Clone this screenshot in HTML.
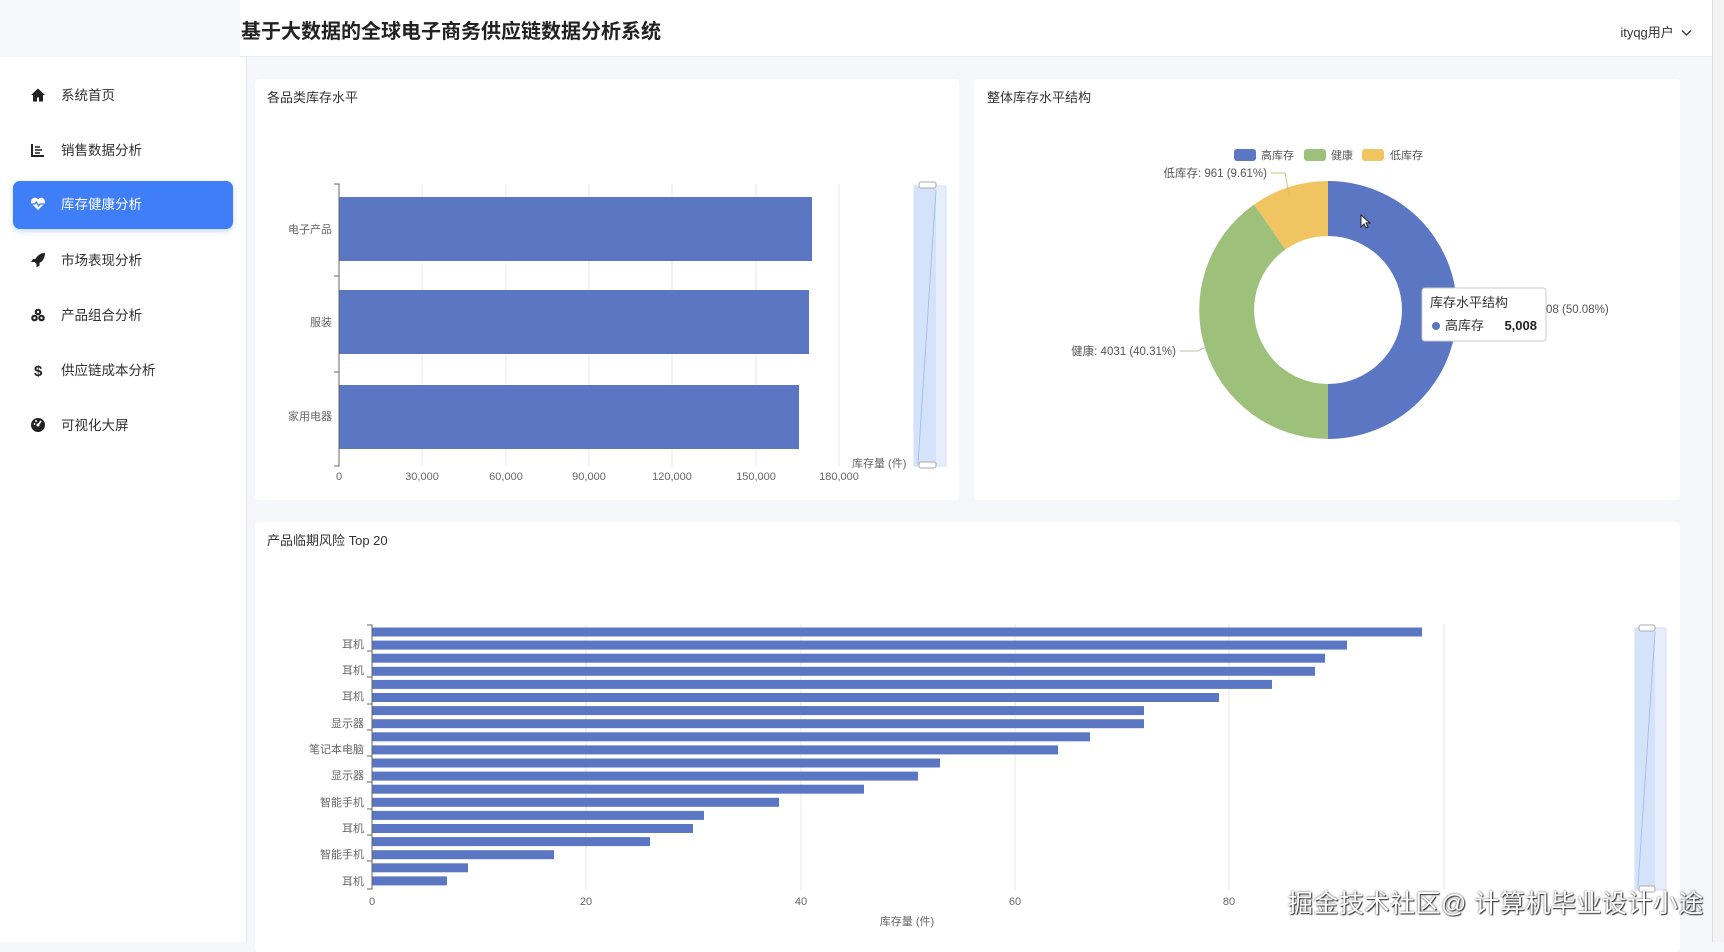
<!DOCTYPE html>
<html><head><meta charset="utf-8"><style>
*{margin:0;padding:0;box-sizing:border-box}
body{width:1724px;height:942px;overflow:hidden;background:#f5f7fa;font-family:"Liberation Sans","Noto Sans CJK SC",sans-serif;position:relative;color:#303133}
.hl{position:absolute;left:0;top:0;width:240px;height:57px;background:#f7f8fa}
.hd{position:absolute;left:240px;top:0;width:1472px;height:57px;background:#fff;border-bottom:1px solid #e8eaee}
.hd h1{position:absolute;left:1px;top:20px;font-size:20px;font-weight:bold;color:#222;line-height:24px}
.user{position:absolute;right:20px;top:22px;font-size:13px;color:#333}
.sb{position:absolute;left:0;top:57px;width:247px;height:885px;background:#fff;border-right:1px solid #e6e8eb}
.it{position:absolute;left:13px;width:220px;height:48px;font-size:13.5px;color:#303133;line-height:48px}
.it .ic{position:absolute;left:17px;top:15px;width:16px;height:16px}
.it span{position:absolute;left:48px}
.act{background:#3f7ef6;color:#fff;border-radius:7px;box-shadow:0 2px 6px rgba(63,126,246,.3)}
.card{position:absolute;background:#fff;border-radius:4px}
.sc{position:absolute;left:1712px;top:0;width:12px;height:942px;background:#f3f3f3;border-left:1px solid #ddd}
.wm{position:absolute;left:1288px;top:884px;font-size:25px;color:#fff;text-shadow:0 0 2px #444,1px 1px 1px #333;letter-spacing:0.5px;white-space:nowrap}
svg text{font-family:"Liberation Sans","Noto Sans CJK SC",sans-serif}
</style></head><body>
<div class="hl"></div>
<div class="hd"><h1>基于大数据的全球电子商务供应链数据分析系统</h1><div class="user">ityqg用户 &nbsp;<svg width="11" height="8" viewBox="0 0 11 8"><path d="M1 1.5L5.5 6L10 1.5" stroke="#333" stroke-width="1.3" fill="none"/></svg></div></div>
<div class="sb">
<div class="it" style="top:15px"><svg class="ic" viewBox="0 0 16 16"><path d="M8 1.5L1 8h2v6.5h4v-4h2v4h4V8h2z" fill="#222"/></svg><span>系统首页</span></div>
<div class="it" style="top:70px"><svg class="ic" viewBox="0 0 16 16"><path d="M2 2v12h12" stroke="#222" stroke-width="2" fill="none"/><path d="M5 5h5M5 8h7M5 11h5" stroke="#222" stroke-width="1.6"/></svg><span>销售数据分析</span></div>
<div class="it act" style="top:124px"><svg class="ic" viewBox="0 0 16 16"><path d="M8 14L1.8 8A3.6 3.6 0 0 1 8 3.2 3.6 3.6 0 0 1 14.2 8z" fill="#fff"/><path d="M2 8h3l1.5-2 2 4 1.5-2h4" stroke="#3f7ef6" stroke-width="1.3" fill="none"/></svg><span>库存健康分析</span></div>
<div class="it" style="top:180px"><svg class="ic" viewBox="0 0 16 16"><path d="M15 1C10 1 7 4 5.5 7L3 7 1 10h3.5l2 2V15.5l3-2V11c3-1.5 5.5-5 5.5-10z" fill="#222"/></svg><span>市场表现分析</span></div>
<div class="it" style="top:235px"><svg class="ic" viewBox="0 0 16 16"><circle cx="8" cy="5" r="3.3" fill="#222"/><circle cx="4.5" cy="11" r="3.3" fill="#222"/><circle cx="11.5" cy="11" r="3.3" fill="#222"/><circle cx="8" cy="5" r="1.2" fill="#fff"/><circle cx="4.5" cy="11" r="1.2" fill="#fff"/><circle cx="11.5" cy="11" r="1.2" fill="#fff"/></svg><span>产品组合分析</span></div>
<div class="it" style="top:290px"><svg class="ic" viewBox="0 0 16 16"><text x="4" y="14" font-size="15" font-weight="bold" fill="#222">$</text></svg><span>供应链成本分析</span></div>
<div class="it" style="top:345px"><svg class="ic" viewBox="0 0 16 16"><circle cx="8" cy="8" r="7" fill="#222"/><path d="M8 8l3-4" stroke="#fff" stroke-width="1.6"/><circle cx="8" cy="8" r="1.5" fill="#fff"/><circle cx="4.5" cy="7" r="1" fill="#fff"/><circle cx="6" cy="4" r="1" fill="#fff"/></svg><span>可视化大屏</span></div>
</div>
<div class="card" style="left:255px;top:79px;width:704px;height:421px"></div>
<div class="card" style="left:974px;top:79px;width:706px;height:421px"></div>
<div class="card" style="left:255px;top:522px;width:1425px;height:430px"></div>
<svg style="position:absolute;left:0;top:0" width="1724" height="942">
<g font-size="13" fill="#333"><text x="267" y="102">各品类库存水平</text><text x="987" y="102">整体库存水平结构</text><text x="267" y="545">产品临期风险 Top 20</text></g>
<g stroke="#e8eaee"><line x1="422" y1="184" x2="422" y2="466"/><line x1="506" y1="184" x2="506" y2="466"/><line x1="589" y1="184" x2="589" y2="466"/><line x1="672" y1="184" x2="672" y2="466"/><line x1="756" y1="184" x2="756" y2="466"/><line x1="839" y1="184" x2="839" y2="466"/></g>
<g fill="#5b76c3"><rect x="339" y="197" width="473" height="64"/><rect x="339" y="290" width="470" height="64"/><rect x="339" y="385" width="460" height="64"/></g>
<g stroke="#666" fill="none"><path d="M334 184h5v282h-5M334 276h5M334 372h5"/></g>
<g font-size="11" fill="#666" text-anchor="end"><text x="332" y="233">电子产品</text><text x="332" y="326">服装</text><text x="332" y="420">家用电器</text></g>
<g font-size="11" fill="#666" text-anchor="middle"><text x="339" y="480">0</text><text x="422" y="480">30,000</text><text x="506" y="480">60,000</text><text x="589" y="480">90,000</text><text x="672" y="480">120,000</text><text x="756" y="480">150,000</text><text x="839" y="480">180,000</text></g>
<text x="852" y="467" font-size="11" fill="#666">库存量 (件)</text>
<rect x="914" y="186" width="32" height="280" fill="#e6eefc" stroke="#d4dcf0"/><rect x="914" y="186" width="22" height="280" fill="#d5e3fa"/><path d="M936 190L918 464" stroke="#a8bff0" fill="none"/><rect x="919" y="182" width="17" height="6" rx="2" fill="#fff" stroke="#aaa"/><rect x="919" y="462" width="17" height="6" rx="2" fill="#fff" stroke="#aaa"/>
<g>
<path d="M1328 181A129 129 0 0 1 1328 439L1328 384A74 74 0 0 0 1328 236Z" fill="#5b76c3"/>
<path d="M1328 439A129 129 0 0 1 1254 204.5L1285.5 249.5A74 74 0 0 0 1328 384Z" fill="#9dc17a"/>
<path d="M1254 204.5A129 129 0 0 1 1328 181L1328 236A74 74 0 0 0 1285.5 249.5Z" fill="#f1c462"/>
</g>
<path d="M1271 173h14l4 22" stroke="#d8c07a" fill="none"/><path d="M1180 351h18l8-4" stroke="#b8c8a0" fill="none"/>
<g font-size="11.5" fill="#555"><text x="1267" y="177" text-anchor="end">低库存: 961 (9.61%)</text><text x="1176" y="355" text-anchor="end">健康: 4031 (40.31%)</text><text x="1546" y="313">08 (50.08%)</text></g>
<g font-size="11" fill="#555"><rect x="1234" y="149" width="22" height="12" rx="3" fill="#5b76c3"/><text x="1261" y="159">高库存</text><rect x="1304" y="149" width="22" height="12" rx="3" fill="#9dc17a"/><text x="1331" y="159">健康</text><rect x="1362" y="149" width="22" height="12" rx="3" fill="#f1c462"/><text x="1390" y="159">低库存</text></g>
<rect x="1422" y="288" width="124" height="53" rx="3" fill="#fff" stroke="#ccc"/>
<text x="1430" y="307" font-size="13" fill="#333">库存水平结构</text><circle cx="1436" cy="326" r="4" fill="#5b76c3"/><text x="1445" y="330" font-size="13" fill="#333">高库存</text><text x="1537" y="330" font-size="13" font-weight="bold" fill="#222" text-anchor="end">5,008</text>
<path d="M1361 215v12l3-3 2 4 2-1-2-4h4z" fill="#fff" stroke="#222" stroke-width="1"/>
<g stroke="#e8eaee"><line x1="586" y1="624" x2="586" y2="890"/><line x1="801" y1="624" x2="801" y2="890"/><line x1="1015" y1="624" x2="1015" y2="890"/><line x1="1229" y1="624" x2="1229" y2="890"/><line x1="1444" y1="624" x2="1444" y2="890"/></g>
<g fill="#5b76c3">
<rect x="372" y="627.5" width="1050" height="9"/><rect x="372" y="640.6" width="975" height="9"/><rect x="372" y="653.7" width="953" height="9"/><rect x="372" y="666.8" width="943" height="9"/><rect x="372" y="679.9" width="900" height="9"/><rect x="372" y="693" width="847" height="9"/><rect x="372" y="706.1" width="772" height="9"/><rect x="372" y="719.2" width="772" height="9"/><rect x="372" y="732.3" width="718" height="9"/><rect x="372" y="745.4" width="686" height="9"/><rect x="372" y="758.5" width="568" height="9"/><rect x="372" y="771.6" width="546" height="9"/><rect x="372" y="784.7" width="492" height="9"/><rect x="372" y="797.8" width="407" height="9"/><rect x="372" y="810.9" width="332" height="9"/><rect x="372" y="824" width="321" height="9"/><rect x="372" y="837.1" width="278" height="9"/><rect x="372" y="850.2" width="182" height="9"/><rect x="372" y="863.3" width="96" height="9"/><rect x="372" y="876.4" width="75" height="9"/>
</g>
<path d="M367 625h5v264h-5M367 651h5M367 677h5M367 704h5M367 730h5M367 756h5M367 782h5M367 809h5M367 835h5M367 861h5" stroke="#666" fill="none"/>
<g font-size="11" fill="#666" text-anchor="end"><text x="364" y="648">耳机</text><text x="364" y="674">耳机</text><text x="364" y="700">耳机</text><text x="364" y="727">显示器</text><text x="364" y="753">笔记本电脑</text><text x="364" y="779">显示器</text><text x="364" y="806">智能手机</text><text x="364" y="832">耳机</text><text x="364" y="858">智能手机</text><text x="364" y="885">耳机</text></g>
<g font-size="11" fill="#666" text-anchor="middle"><text x="372" y="905">0</text><text x="586" y="905">20</text><text x="801" y="905">40</text><text x="1015" y="905">60</text><text x="1229" y="905">80</text><text x="907" y="925">库存量 (件)</text></g>
<rect x="1635" y="628" width="31" height="262" fill="#e6eefc" stroke="#d4dcf0"/><rect x="1635" y="628" width="20" height="262" fill="#d5e3fa"/><path d="M1655 632L1638 886" stroke="#a8bff0" fill="none"/><rect x="1639" y="625" width="16" height="6" rx="2" fill="#fff" stroke="#aaa"/><rect x="1639" y="886" width="16" height="6" rx="2" fill="#fff" stroke="#aaa"/>
</svg>
<div class="wm">掘金技术社区@ 计算机毕业设计小途</div>
<div class="sc"></div>
</body></html>
